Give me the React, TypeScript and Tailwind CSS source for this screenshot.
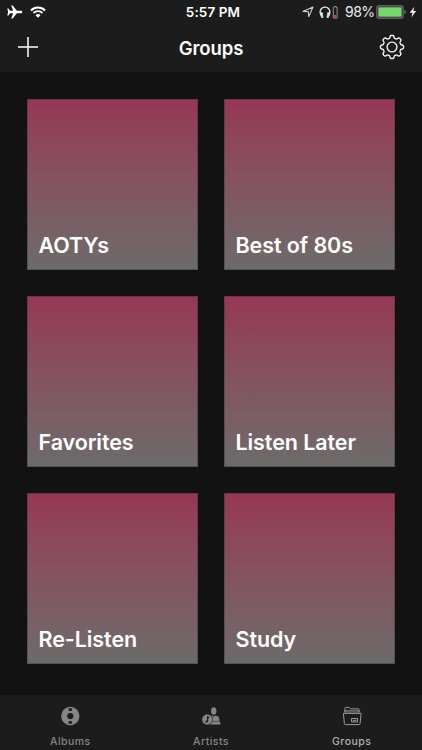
// src/App.tsx
import type { ReactNode } from 'react';

const GROUPS = ['AOTYs', 'Best of 80s', 'Favorites', 'Listen Later', 'Re-Listen', 'Study'];

// Eight-toothed outline centred on 13,13
const gearPath =
  Array.from({ length: 160 }, (_, i) => {
    const a = (i / 160) * Math.PI * 2;
    const r = 10.3 + 1.3 * Math.tanh(2.2 * Math.cos(8 * a));
    return `${i === 0 ? 'M' : 'L'}${(13 + r * Math.cos(a)).toFixed(2)} ${(13 + r * Math.sin(a)).toFixed(2)}`;
  }).join('') + 'Z';

function StatusBar() {
  return (
    <div className="grid h-6 grid-cols-[1fr_auto_1fr] items-center text-white">
      <div className="flex items-center pl-[7px]">
        <svg width="16" height="14" viewBox="0 0 16 14" fill="currentColor">
          <path d="M15.3 7c0-.8-.8-1.3-1.9-1.3H9.8L5.7.4H4.2l2 5.3H3L1.5 3.6H.3L1.1 7 .3 10.4h1.2L3 8.3h3.2l-2 5.3h1.5l4.1-5.3h3.6c1.1 0 1.9-.5 1.9-1.3z" />
        </svg>
        <svg className="ml-[7px]" width="16" height="12" viewBox="0 0 16 12" fill="none" stroke="currentColor">
          <path d="M1 4.4a10 10 0 0 1 14 0" strokeWidth="2.1" />
          <path d="M3.5 7a6.4 6.4 0 0 1 9 0" strokeWidth="1.9" />
          <path d="M8 11.7 5.5 9.2a3.6 3.6 0 0 1 5 0z" fill="currentColor" stroke="none" />
        </svg>
      </div>
      <span className="pl-1 text-[13.5px] font-semibold leading-6 tracking-[0.1px]">5:57 PM</span>
      <div className="flex items-center justify-end pr-[5px]">
        <svg className="mr-[5px]" width="12" height="12" viewBox="0 0 12 12" fill="none" stroke="#d2d2d2" strokeWidth="1.1">
          <path d="M11 1 6.8 10.6 6.3 5.8 1 5.4z" strokeLinejoin="round" />
        </svg>
        <svg width="20" height="13" viewBox="0 0 20 13" fill="none">
          <path d="M2.1 9.5C-.3 5 2.3 1.1 6 1.1S12.3 5 9.9 9.5" stroke="#e4e4e4" strokeWidth="1.3" />
          <path d="M1.2 6.7h2.1l.7 4.8H2.6zM10.8 6.7H8.7L8 11.5h1.4z" fill="#e4e4e4" stroke="#e4e4e4" strokeWidth=".8" />
          <path d="M15.3.4h1.8v1h1v10.7h-3.8V1.4h1z" stroke="#aaa" strokeWidth=".8" />
          <path d="M15 9h2.4v2.5H15z" fill="#e33d35" />
        </svg>
        <span className="ml-[6px] mr-[2px] w-[29px] text-[14px] leading-6 tracking-[-0.5px] text-[#ececec]">98%</span>
        <svg width="31" height="14" viewBox="0 0 31 14">
          <rect x=".9" y=".9" width="26.2" height="12.2" rx="2.2" fill="none" stroke="#777" strokeWidth="1.1" />
          <rect x="2.3" y="2.3" width="23.4" height="9.4" rx="1" fill="#76d571" />
          <path d="M28.5 4.8c1.7.6 1.7 3.8 0 4.4z" fill="#777" />
        </svg>
        <svg className="ml-[2px]" width="8" height="12" viewBox="0 0 8 12" fill="currentColor">
          <path d="M5.4.7.8 6.7h2.8l-1.2 4.6L7.1 5H4.2z" />
        </svg>
      </div>
    </div>
  );
}

function AlbumsIcon() {
  return (
    <svg width="20" height="20" viewBox="0 0 20 20">
      <circle cx="10.3" cy="10" r="9.2" fill="#858585" />
      <circle cx="10.3" cy="10" r="3.1" fill="#1c1c1c" />
      <path d="M8.2 2.5q2.1-.6 4.2 0l-.9 2.4H9.1zM8.2 17.5q2.1.6 4.2 0l-.9-2.4H9.1z" fill="#1c1c1c" />
    </svg>
  );
}

function ArtistsIcon() {
  return (
    <svg width="20" height="20" viewBox="0 0 20 20" fill="#858585">
      <ellipse cx="12.7" cy="5" rx="2.7" ry="3.7" />
      <path d="M7.5 18.6v-5.2c0-2.6 1.3-3.5 3.6-3.8l1.6 1.2 1.6-1.2c2.8.4 4.1 1.4 4.1 4v1.8l.9.3v2.9z" />
      <path d="M11.5 15.4H19" stroke="#1c1c1c" strokeWidth=".5" />
      <circle cx="6.2" cy="13.5" r="5.4" stroke="#1c1c1c" strokeWidth=".7" />
      <path d="M6.6 10v5.2M6.6 10q.4 1.3 1.5 2" stroke="#1c1c1c" strokeWidth="1.1" fill="none" />
      <ellipse cx="5.6" cy="15.6" rx="1.3" ry="1.1" fill="#1c1c1c" />
    </svg>
  );
}

function GroupsIcon() {
  return (
    <svg width="20" height="20" viewBox="0 0 20 20" fill="none" stroke="#999" strokeWidth="1">
      <path d="M2.9 6V2.3q0-.9.9-.9h3.4l1.3 1.4h7.7q.9 0 .9.9V6" />
      <path d="M3 4.7h14M1.9 6h16.6" strokeWidth=".8" />
      <path d="M1.4 7.4h17.7l-1 10.2q-.1 1-1 1H3.4q-.9 0-1-1z" />
      <path d="M9.5 12.5h6v3.4h-6z" />
      <path d="M10.8 14.3h3.5" />
    </svg>
  );
}

function Tab({ label, icon, active = false }: { label: string; icon: ReactNode; active?: boolean }) {
  return (
    <button
      type="button"
      className={`flex flex-1 flex-col items-center pt-[11px] text-[10.5px] font-medium tracking-[0.45px] ${
        active ? 'text-[#b0b0b0]' : 'text-[#858585]'
      }`}
    >
      {icon}
      <span className="mt-2 leading-4">{label}</span>
    </button>
  );
}

export default function App() {
  return (
    <div className="flex h-[750px] w-[422px] flex-col overflow-hidden bg-[#121212] font-[Inter,'Liberation_Sans',sans-serif] text-white">
      <header className="h-[72px] shrink-0 bg-[#1c1c1c]">
        <StatusBar />
        <div className="grid h-[46px] grid-cols-[1fr_auto_1fr] items-center">
          <button type="button" aria-label="Add group" className="ml-[18px] w-5">
            <svg width="20" height="20" viewBox="0 0 20 20" stroke="white" strokeWidth="1.5">
              <path d="M10 0v20M0 10h20" />
            </svg>
          </button>
          <h1 className="pt-[2px] text-[18.5px] font-semibold leading-6 tracking-[-0.1px]">Groups</h1>
          <button type="button" aria-label="Settings" className="mr-[17px] justify-self-end">
            <svg width="26" height="26" viewBox="0 0 26 26" fill="none" stroke="#f2f2f2" strokeWidth="1.4">
              <path d={gearPath} />
              <circle cx="13" cy="13" r="4.9" />
            </svg>
          </button>
        </div>
      </header>

      <main className="grid flex-1 grid-cols-[171px_171px] content-start gap-[26px] px-[27px] pt-[27px]">
        {GROUPS.map((name) => (
          <div
            key={name}
            className="flex h-[171px] items-end bg-linear-to-b from-[#953755] to-[#6b6b6b] px-[11.5px] pb-[11px] shadow-[inset_0_0_0_1px_rgba(40,40,40,0.35)]"
          >
            <span className="text-[21.5px] font-semibold leading-7 tracking-[-0.08px]">{name}</span>
          </div>
        ))}
      </main>

      <nav className="flex h-[55px] shrink-0 bg-[#1c1c1c]">
        <Tab label="Albums" icon={<AlbumsIcon />} />
        <Tab label="Artists" icon={<ArtistsIcon />} />
        <Tab label="Groups" icon={<GroupsIcon />} active />
      </nav>
    </div>
  );
}
